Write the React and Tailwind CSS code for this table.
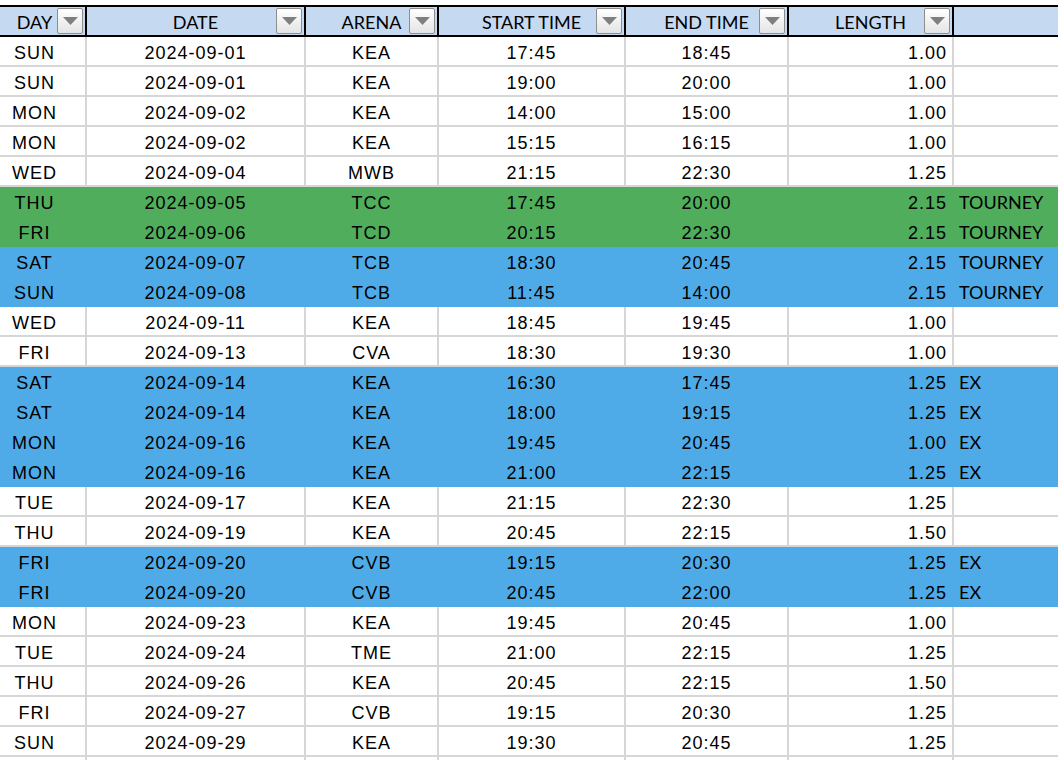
import React from 'react';

const GREEN = 'bg-[#50ad5c]';
const BLUE = 'bg-[#4eabe8]';

const rows = [
  ['SUN', '2024-09-01', 'KEA', '17:45', '18:45', '1.00', ''],
  ['SUN', '2024-09-01', 'KEA', '19:00', '20:00', '1.00', ''],
  ['MON', '2024-09-02', 'KEA', '14:00', '15:00', '1.00', ''],
  ['MON', '2024-09-02', 'KEA', '15:15', '16:15', '1.00', ''],
  ['WED', '2024-09-04', 'MWB', '21:15', '22:30', '1.25', ''],
  ['THU', '2024-09-05', 'TCC', '17:45', '20:00', '2.15', 'TOURNEY', GREEN],
  ['FRI', '2024-09-06', 'TCD', '20:15', '22:30', '2.15', 'TOURNEY', GREEN],
  ['SAT', '2024-09-07', 'TCB', '18:30', '20:45', '2.15', 'TOURNEY', BLUE],
  ['SUN', '2024-09-08', 'TCB', '11:45', '14:00', '2.15', 'TOURNEY', BLUE],
  ['WED', '2024-09-11', 'KEA', '18:45', '19:45', '1.00', ''],
  ['FRI', '2024-09-13', 'CVA', '18:30', '19:30', '1.00', ''],
  ['SAT', '2024-09-14', 'KEA', '16:30', '17:45', '1.25', 'EX', BLUE],
  ['SAT', '2024-09-14', 'KEA', '18:00', '19:15', '1.25', 'EX', BLUE],
  ['MON', '2024-09-16', 'KEA', '19:45', '20:45', '1.00', 'EX', BLUE],
  ['MON', '2024-09-16', 'KEA', '21:00', '22:15', '1.25', 'EX', BLUE],
  ['TUE', '2024-09-17', 'KEA', '21:15', '22:30', '1.25', ''],
  ['THU', '2024-09-19', 'KEA', '20:45', '22:15', '1.50', ''],
  ['FRI', '2024-09-20', 'CVB', '19:15', '20:30', '1.25', 'EX', BLUE],
  ['FRI', '2024-09-20', 'CVB', '20:45', '22:00', '1.25', 'EX', BLUE],
  ['MON', '2024-09-23', 'KEA', '19:45', '20:45', '1.00', ''],
  ['TUE', '2024-09-24', 'TME', '21:00', '22:15', '1.25', ''],
  ['THU', '2024-09-26', 'KEA', '20:45', '22:15', '1.50', ''],
  ['FRI', '2024-09-27', 'CVB', '19:15', '20:30', '1.25', ''],
  ['SUN', '2024-09-29', 'KEA', '19:30', '20:45', '1.25', ''],
  ['', '', '', '', '', '', ''],
];

// column widths incl. right border
const cols = ['w-[87px]', 'w-[219px]', 'w-[133px]', 'w-[187px]', 'w-[163px]', 'w-[165px]'];

function FilterButton() {
  return (
    <div className="flex h-[26px] w-[26px] shrink-0 items-center justify-center rounded-[2px] border border-[#8e8e8e] bg-gradient-to-b from-white to-[#e4e4e4]">
      <svg width="15" height="8" viewBox="0 0 15 8">
        <polygon points="0,0 15,0 7.5,8" fill="#7f7f7f" />
      </svg>
    </div>
  );
}

function HeaderCell({ label, width, pr }) {
  return (
    <div className={`${width} relative flex h-full shrink-0 items-end border-r-2 border-black`}>
      <span className={`w-full pb-[3px] text-center leading-[20px] ${pr || ''}`}>{label}</span>
      <div className="absolute right-[2px] top-[1px]">
        <FilterButton />
      </div>
    </div>
  );
}

export default function App() {
  const headers = ['DAY', 'DATE', 'ARENA', 'START TIME', 'END TIME', 'LENGTH'];

  return (
    <div className="h-[760px] w-[1058px] overflow-hidden bg-white text-black">
      {/* header row */}
      <div className="mt-[5px] flex h-[32px] border-y-2 border-black bg-[#c5d9f1] font-['Lato',sans-serif] text-[18px]">
        {headers.map((h, i) => (
          <HeaderCell key={h} label={h} width={cols[i]} pr={i === 0 ? 'pr-[16px]' : ''} />
        ))}
        <div className="flex-1" />
      </div>

      {/* data rows */}
      {rows.map((r, idx) => {
        const fill = r[7];
        const line = fill ? 'border-transparent' : 'border-[#d6d6d6]';
        const cell = `flex h-full shrink-0 items-end border-r-2 pb-[2px] ${line}`;
        return (
          <div
            key={idx}
            className={`flex h-[30px] border-b-2 ${line} ${fill || ''} font-['Liberation_Sans',Arial,sans-serif] text-[18px] leading-[20px] tracking-[1px]`}
          >
            <div className={`${cols[0]} ${cell} justify-center pr-[16px]`}>{r[0]}</div>
            <div className={`${cols[1]} ${cell} justify-center`}>{r[1]}</div>
            <div className={`${cols[2]} ${cell} justify-center`}>{r[2]}</div>
            <div className={`${cols[3]} ${cell} justify-center`}>{r[3]}</div>
            <div className={`${cols[4]} ${cell} justify-center`}>{r[4]}</div>
            <div className={`${cols[5]} ${cell} justify-end pr-[5px]`}>{r[5]}</div>
            <div className="flex h-full flex-1 items-end pb-[3px] pl-[5px] font-['Lato',sans-serif] tracking-normal">
              {r[6]}
            </div>
          </div>
        );
      })}
    </div>
  );
}
